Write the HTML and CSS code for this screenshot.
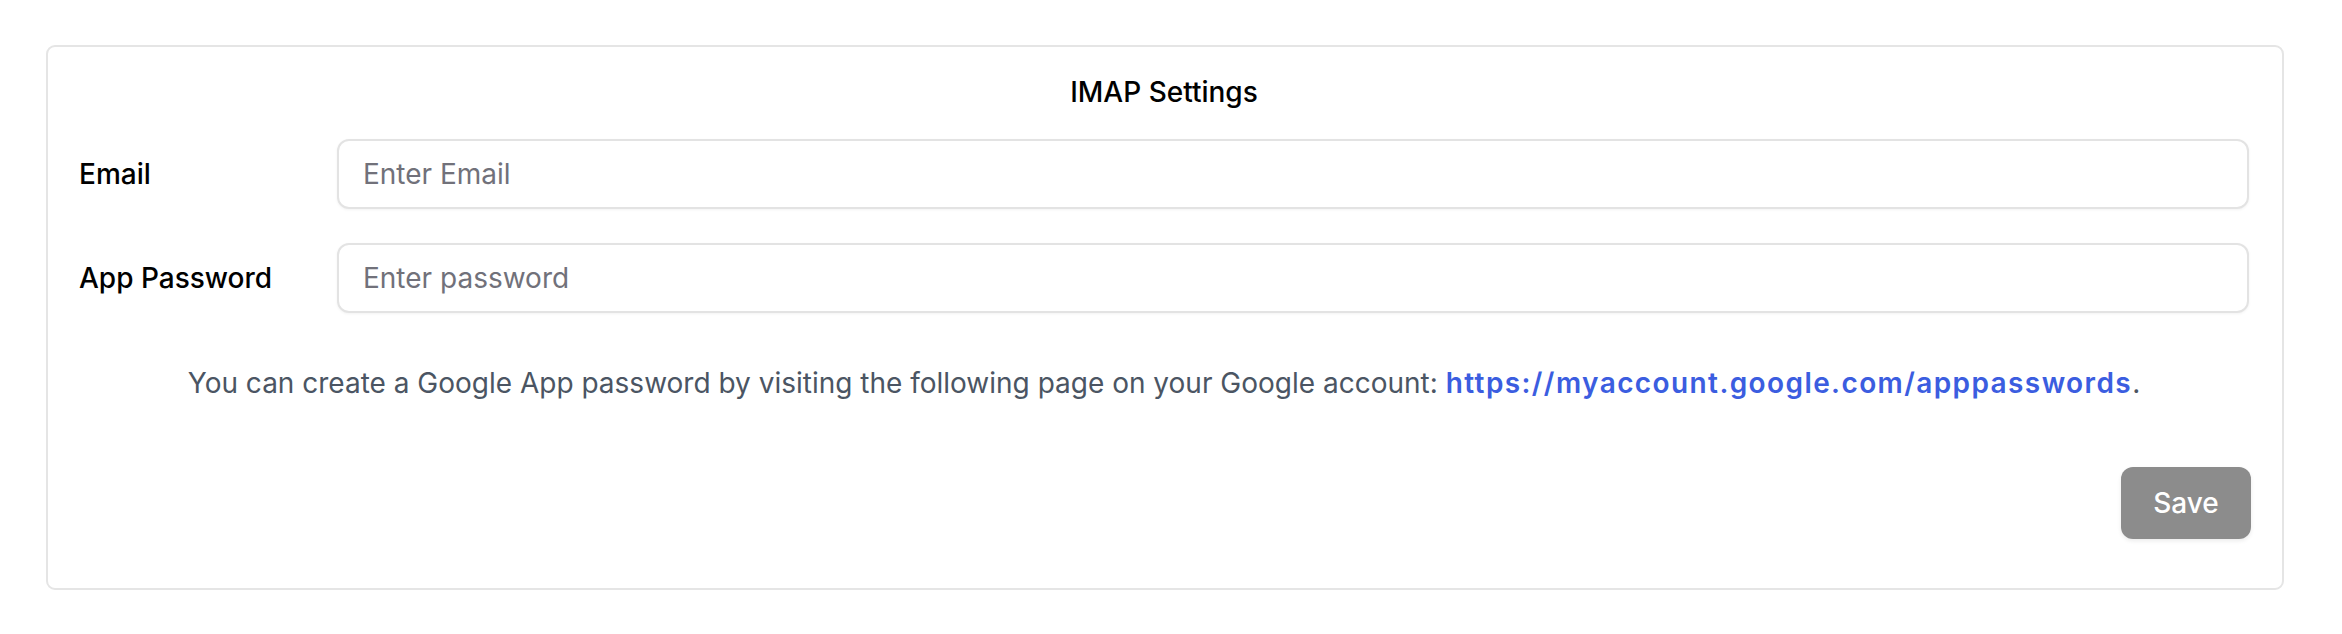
FILE: index.html
```html
<!DOCTYPE html>
<html lang="en">
<head>
<meta charset="utf-8">
<title>IMAP Settings</title>
<link rel="stylesheet" href="styles.css">
</head>
<body>
  <div class="card">
    <h2 class="title">IMAP Settings</h2>
    <div class="row">
      <label class="label" for="email">Email</label>
      <input class="input" id="email" type="text" placeholder="Enter Email">
    </div>
    <div class="row row-second">
      <label class="label" for="pw">App Password</label>
      <input class="input" id="pw" type="password" placeholder="Enter password">
    </div>
    <p class="help">You can create a Google App password by visiting the following page on your Google account: <a class="link" href="#">https://myaccount.google.com/apppasswords</a>.</p>
    <div class="actions">
      <button class="btn" type="button">Save</button>
    </div>
  </div>
</body>
</html>
```

FILE: styles.css
```css
* { box-sizing: border-box; }
html, body { margin: 0; padding: 0; background: #ffffff; }
body {
  font-family: Inter, "Noto Sans", "Liberation Sans", sans-serif;
  color: #000;
  padding: 45px 58px 0 46px;
}
.card {
  border: 2px solid #e5e5e5;
  border-radius: 9px;
  padding: 25px 33px 49px 31px;
  background: #fff;
}
.title {
  margin: 0;
  font-size: 28px;
  line-height: 40px;
  font-weight: 500;
  text-align: center;
}
.row {
  display: flex;
  align-items: center;
  margin-top: 27px;
}
.row-second { margin-top: 34px; }
.label {
  width: 258px;
  flex: none;
  font-size: 28px;
  font-weight: 500;
}
.input {
  flex: 1;
  height: 70px;
  border: 2px solid #e3e3e3;
  border-radius: 12px;
  padding: 0 24px;
  font-family: inherit;
  font-size: 28px;
  color: #111;
  background: #fff;
  box-shadow: 0 1px 3px rgba(0,0,0,0.05);
  outline: none;
}
.input::placeholder { color: #71717a; }
.help {
  margin: 50px 0 0;
  text-align: center;
  font-size: 28px;
  line-height: 40px;
  color: #4b5563;
}
.link {
  color: #3b5de0;
  font-weight: 600;
  letter-spacing: 1.4px;
  text-decoration: none;
}
.actions {
  display: flex;
  justify-content: flex-end;
  margin-top: 64px;
  margin-right: -2px;
}
.btn {
  width: 130px;
  height: 72px;
  border: none;
  border-radius: 12px;
  background: #8c8c8c;
  color: #fff;
  font-family: inherit;
  font-size: 28px;
  font-weight: 500;
  box-shadow: 0 2px 4px rgba(0,0,0,0.08);
}
```
